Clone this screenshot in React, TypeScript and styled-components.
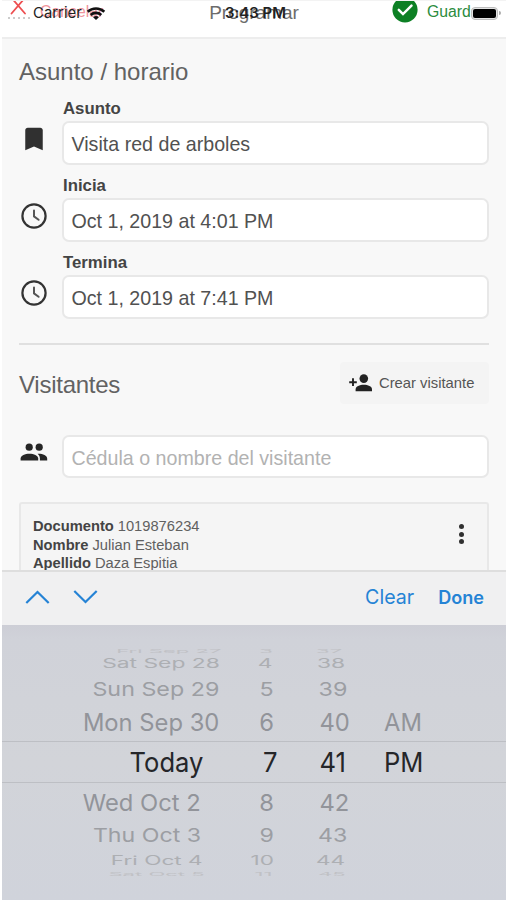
import React from 'react';
import styled, { createGlobalStyle } from 'styled-components';
import { MdBookmark } from 'react-icons/md';

const GlobalStyle = createGlobalStyle`
  * { box-sizing: border-box; }
  body { margin: 0; background: #fff; }
`;

const Screen = styled.div`
  position: relative;
  width: 507px;
  height: 900px;
  padding: 0 1px 0 2px;
  overflow: hidden;
  display: flex;
  flex-direction: column;
  background: #fff;
  color: #4c4c4c;
  font-family: 'Liberation Sans', Arial, sans-serif;
`;

const NavBar = styled.header`
  flex: none;
  height: 39px;
  display: grid;
  grid-template-columns: 1fr auto 1fr;
  align-items: start;
  background: #fff;
  border-top: 1px solid #f3f3f3;
  border-bottom: 2px solid #ededed;
`;

const NavAction = styled.div<{ $tone: string; $end?: boolean }>`
  display: flex;
  align-items: flex-start;
  color: ${(p) => p.$tone};
  font-size: 15.8px;
  line-height: 22px;
  white-space: nowrap;
  ${(p) => (p.$end ? 'padding-left: 93px; gap: 9px;' : 'padding-left: 6px; gap: 10px;')}
`;

const NavTitle = styled.h1`
  margin: 0;
  font-size: 19px;
  font-weight: 400;
  line-height: 24px;
  color: #6c6c6c;
`;

const StatusBar = styled.div`
  position: absolute;
  inset: 4px 6px auto 7px;
  height: 18px;
  display: grid;
  grid-template-columns: 218px 1fr auto;
  align-items: center;
  font-family: Inter, sans-serif;
  font-size: 14.9px;
  color: #222;
`;

const Signal = styled.div`
  display: flex;
  align-items: center;
`;

const SignalDots = styled.div`
  display: flex;
  gap: 3px;
  width: 26px;
  padding: 9px 0 0 1px;
`;

const Dot = styled.i`
  width: 2px;
  height: 2px;
  border-radius: 50%;
  background: #bbb;
`;

const Clock = styled.span`
  font-weight: 600;
  letter-spacing: 0.05px;
`;

const Battery = styled.div`
  display: flex;
  align-items: center;
  gap: 1px;
`;

const BatteryBody = styled.div`
  width: 27px;
  height: 13px;
  padding: 1px;
  border: 1px solid #bdbdbd;
  border-radius: 4px;
  background: #e4e4e4;
  &::before {
    content: '';
    display: block;
    height: 9px;
    border-radius: 2px;
    background: #000;
  }
`;

const BatteryTip = styled.i`
  width: 2px;
  height: 4px;
  border-radius: 0 2px 2px 0;
  background: #aaa;
`;

const Form = styled.main`
  flex: none;
  height: 531px;
  overflow: hidden;
  padding: 19px 17px 0;
  background: #f8f8f8;
`;

const SectionTitle = styled.h2<{ $tight?: boolean }>`
  margin: 0;
  font-size: 24px;
  font-weight: 400;
  line-height: 28px;
  color: #626262;
  letter-spacing: ${(p) => (p.$tight ? '-0.25px' : '0')};
`;

const Fields = styled.div`
  padding-top: 13px;
`;

const Field = styled.div`
  display: grid;
  grid-template-columns: 43px 1fr;
  height: 77.2px;
`;

const FieldIcon = styled.div<{ $top: number; $left?: number }>`
  padding: ${(p) => p.$top}px 0 0 ${(p) => p.$left ?? 0}px;
  color: #303030;
  line-height: 0;
`;

const Label = styled.label`
  display: block;
  height: 22px;
  padding-left: 1px;
  font-size: 16.8px;
  font-weight: 700;
  line-height: 20px;
  color: #444;
`;

const TextBox = styled.div<{ $placeholder?: boolean }>`
  height: 43.5px;
  padding: 1px 0 0 7.5px;
  border: 2px solid #e8e8e8;
  border-radius: 7px;
  background: #fff;
  font-size: 19.65px;
  line-height: 40px;
  white-space: nowrap;
  color: ${(p) => (p.$placeholder ? '#b2b2b2' : '#515151')};
`;

const Divider = styled.hr`
  height: 2px;
  margin: 12px 0 0;
  border: 0;
  background: #e0e0e0;
`;

const SectionHeader = styled.div`
  display: flex;
  align-items: center;
  justify-content: space-between;
  height: 44px;
  margin-top: 17px;
`;

const HeaderTitle = styled.div`
  padding-top: 2px;
`;

const CreateButton = styled.button`
  display: flex;
  align-items: center;
  gap: 6px;
  width: 149px;
  height: 42px;
  margin-bottom: 2px;
  padding: 0 0 0 9px;
  border: 0;
  border-radius: 4px;
  background: #f4f4f4;
  color: #555;
  font: 14.8px 'Liberation Sans', Arial, sans-serif;
  white-space: nowrap;
  svg { flex: none; }
`;

const SearchRow = styled.div`
  display: grid;
  grid-template-columns: 43px 1fr;
  margin-top: 29px;
`;

const VisitorCard = styled.article`
  display: flex;
  justify-content: space-between;
  height: 110px;
  margin-top: 24px;
  padding: 13px 19px 0 12px;
  border: 2px solid #e8e8e8;
  border-radius: 3px;
  background: #f5f5f5;
`;

const Details = styled.dl`
  margin: 0;
  font-size: 14.7px;
  line-height: 18.6px;
  color: #606060;
`;

const Detail = styled.div`
  display: flex;
  gap: 4px;
`;

const Term = styled.dt`
  font-weight: 700;
  color: #444;
`;

const Value = styled.dd`
  margin: 0;
`;

const Kebab = styled.div`
  display: flex;
  flex-direction: column;
  gap: 2.6px;
  padding: 7px 4px 0 0;
`;

const KebabDot = styled.i`
  width: 5px;
  height: 5px;
  border-radius: 50%;
  background: #303030;
`;

const Accessory = styled.div`
  flex: none;
  height: 55px;
  display: flex;
  align-items: center;
  padding: 0 22px 3px 23px;
  border-top: 2px solid #dedede;
  background: #f0f0f1;
  color: #2583d5;
  font-family: Inter, sans-serif;
`;

const Arrows = styled.div`
  display: flex;
  gap: 23px;
  flex: 1;
`;

const BarButton = styled.span<{ $strong?: boolean }>`
  font-size: ${(p) => (p.$strong ? 18.1 : 19.6)}px;
  font-weight: ${(p) => (p.$strong ? 600 : 400)};
  margin-left: ${(p) => (p.$strong ? 24 : 0)}px;
`;

const Picker = styled.section`
  flex: 1;
  padding-top: 22px;
  background: linear-gradient(#cdced6 0, #d0d2d9 14px, #d2d4d9 50%, #d0d3db 100%);
  font-family: Inter, sans-serif;
`;

const PickerRow = styled.div<{ $h: number; $color: string; $selected?: boolean; $clip?: boolean }>`
  display: grid;
  grid-template-columns: 217px 55px 45px 65px 1fr;
  align-items: center;
  height: ${(p) => p.$h}px;
  color: ${(p) => p.$color};
  font-size: ${(p) => (p.$selected ? 27.5 : 24)}px;
  line-height: 0;
  white-space: nowrap;
  overflow: ${(p) => (p.$clip ? 'hidden' : 'visible')};
  border: solid #bdbfc4;
  border-width: ${(p) => (p.$selected ? '1.5px 0' : '0')};
`;

const Cell = styled.span<{ $sx: number; $sy: number; $shift?: number; $from?: 'left' | 'right' }>`
  justify-self: ${(p) => (p.$from === 'left' ? 'start' : 'end')};
  transform: translateX(${(p) => p.$shift ?? 0}px) scale(${(p) => p.$sx}, ${(p) => p.$sy});
  transform-origin: ${(p) => p.$from ?? 'right'} center;
`;

const Minute = styled(Cell)`
  grid-column: 4;
`;

type Slot = {
  date: string; hour: string; minute: string; half?: string;
  h: number; sx: number; sy: number; color: string;
  dx: number; hx?: number; mx?: number; selected?: boolean; clip?: boolean;
};

const slots: Slot[] = [
  { date: 'Fri Sep 27', hour: '3', minute: '37', h: 7, sx: 0.92, sy: 0.22, color: '#c0c1c5', dx: 2, hx: -1, mx: -3, clip: true },
  { date: 'Sat Sep 28', hour: '4', minute: '38', h: 20, sx: 0.95, sy: 0.54, color: '#adafb3', dx: 1, hx: -1, mx: -2 },
  { date: 'Sun Sep 29', hour: '5', minute: '39', h: 31, sx: 0.97, sy: 0.8, color: '#9c9ea3', dx: 0.5, mx: -0.5 },
  { date: 'Mon Sep 30', hour: '6', minute: '40', half: 'AM', h: 36, sx: 0.99, sy: 0.99, color: '#92949a', dx: 0.5, mx: 0.5 },
  { date: 'Today', hour: '7', minute: '41', half: 'PM', h: 42, sx: 0.93, sy: 1, color: '#252629', dx: -16, hx: 4, mx: 0.5, selected: true },
  { date: 'Wed Oct 2', hour: '8', minute: '42', h: 39, sx: 0.99, sy: 0.98, color: '#92949a', dx: -18.5, mx: 0.5 },
  { date: 'Thu Oct 3', hour: '9', minute: '43', h: 28, sx: 0.965, sy: 0.8, color: '#9c9ea3', dx: -18, mx: -1 },
  { date: 'Fri Oct 4', hour: '10', minute: '44', h: 21, sx: 0.94, sy: 0.52, color: '#adafb3', dx: -16, hx: 0, mx: -3 },
  { date: 'Sat Oct 5', hour: '11', minute: '45', h: 5, sx: 0.92, sy: 0.2, color: '#c0c1c5', dx: -14, hx: -1, mx: -1, clip: true },
];

const ClockIcon = () => (
  <svg width="28" height="28" viewBox="0 0 28 28" fill="none" stroke="#333" strokeLinecap="round">
    <circle cx="14" cy="14" r="11.6" strokeWidth="2.2" />
    <path d="M14 8.6v5.8l4.6 3.4" stroke="#555" strokeWidth="2" strokeLinejoin="round" />
  </svg>
);

const PeopleIcon = () => (
  <svg width="30" height="22" viewBox="0 0 30 22" fill="#262626">
    <circle cx="10.2" cy="5.2" r="3.6" />
    <circle cx="20.2" cy="5.2" r="3.6" />
    <path d="M1.6 18.6v-2c0-3 4.4-4.9 8.8-4.9s8.8 1.900 8.800 4.900v2z" />
    <path d="M20.900 18.600v-2.200c0-1.900-.9-3.400-2.300-4.600 4.600-.3 9.600 1.500 9.600 4.800v2z" />
  </svg>
);

const PersonAddIcon = () => (
  <svg width="24" height="20" viewBox="0 0 24 20" fill="#222">
    <circle cx="14.800" cy="5.600" r="4.300" />
    <path d="M6.600 18.300v-1.900c0-3 4.100-4.600 8.200-4.600s8.200 1.600 8.200 4.600v1.900z" />
    <path d="M4 5.300v7.800M.2 9.200h7.600" stroke="#222" strokeWidth="1.900" />
  </svg>
);

const Chevron = ({ up }: { up?: boolean }) => (
  <svg width="25" height="16" viewBox="0 0 25 16" fill="none" stroke="#2583d5" strokeWidth="2.2">
    <path d={up ? 'M1.3 14 12.5 3l11.2 11' : 'M1.3 2 12.5 13l11.2-11'} />
  </svg>
);

const CancelIcon = () => (
  <svg width="22" height="18" viewBox="0 0 22 18" fill="none" stroke="#ed4e50" strokeWidth="1.8">
    <path d="M4.500-2 17 12.500M16-2 3.500 12.500" strokeLinecap="round" />
  </svg>
);

const ConfirmIcon = () => (
  <svg width="26" height="24" viewBox="0 0 26 24" fill="none">
    <circle cx="13" cy="8.800" r="12.600" fill="#0d8024" />
    <path d="m6.800 8.800 4.200 4.300 8.500-8.400" stroke="#fff" strokeWidth="2.500" strokeLinecap="round" />
  </svg>
);

const WifiIcon = () => (
  <svg width="20" height="15" viewBox="0 0 19 15" fill="none" stroke="#111" strokeWidth="2.600">
    <path d="M1.200 5.800c4.700-4.500 11.900-4.500 16.600 0M4.200 9c3-2.800 7.600-2.800 10.600 0" />
    <path d="M6.600 11.200c1.700-1.500 4.100-1.500 5.800 0L9.500 14z" fill="#111" stroke="none" />
  </svg>
);

export default function App() {
  return (
    <Screen>
      <GlobalStyle />
      <NavBar>
        <NavAction $tone="#f0949c"><CancelIcon />Cancelar</NavAction>
        <NavTitle>Programar</NavTitle>
        <NavAction $tone="#2c8c3e" $end><ConfirmIcon />Guardar</NavAction>
      </NavBar>
      <StatusBar>
        <Signal>
          <SignalDots><Dot /><Dot /><Dot /><Dot /><Dot /></SignalDots>
          Carrier&nbsp;<WifiIcon />
        </Signal>
        <Clock>3:43 PM</Clock>
        <Battery><BatteryBody /><BatteryTip /></Battery>
      </StatusBar>
      <Form>
        <SectionTitle>Asunto / horario</SectionTitle>
        <Fields>
          <Field>
            <FieldIcon $top={25}><MdBookmark size={30} /></FieldIcon>
            <div><Label>Asunto</Label><TextBox>Visita red de arboles</TextBox></div>
          </Field>
          <Field>
            <FieldIcon $top={26} $left={1}><ClockIcon /></FieldIcon>
            <div><Label>Inicia</Label><TextBox>Oct 1, 2019 at 4:01 PM</TextBox></div>
          </Field>
          <Field>
            <FieldIcon $top={26} $left={1}><ClockIcon /></FieldIcon>
            <div><Label>Termina</Label><TextBox>Oct 1, 2019 at 7:41 PM</TextBox></div>
          </Field>
        </Fields>
        <Divider />
        <SectionHeader>
          <HeaderTitle><SectionTitle $tight>Visitantes</SectionTitle></HeaderTitle>
          <CreateButton><PersonAddIcon />Crear visitante</CreateButton>
        </SectionHeader>
        <SearchRow>
          <FieldIcon $top={7}><PeopleIcon /></FieldIcon>
          <TextBox $placeholder>Cédula o nombre del visitante</TextBox>
        </SearchRow>
        <VisitorCard>
          <Details>
            <Detail><Term>Documento</Term><Value>1019876234</Value></Detail>
            <Detail><Term>Nombre</Term><Value>Julian Esteban</Value></Detail>
            <Detail><Term>Apellido</Term><Value>Daza Espitia</Value></Detail>
          </Details>
          <Kebab><KebabDot /><KebabDot /><KebabDot /></Kebab>
        </VisitorCard>
      </Form>
      <Accessory>
        <Arrows><Chevron up /><Chevron /></Arrows>
        <BarButton>Clear</BarButton>
        <BarButton $strong>Done</BarButton>
      </Accessory>
      <Picker>
        {slots.map((s) => (
          <PickerRow key={s.date} $h={s.h} $color={s.color} $selected={s.selected} $clip={s.clip}>
            <Cell $sx={s.sx} $sy={s.sy} $shift={s.dx}>{s.date}</Cell>
            <Cell $sx={s.sx} $sy={s.sy} $shift={s.hx}>{s.hour}</Cell>
            <Minute $sx={s.sx} $sy={s.sy} $shift={s.mx} $from="left">{s.minute}</Minute>
            {s.half && <Cell $sx={s.sx} $sy={s.sy} $from="left">{s.half}</Cell>}
          </PickerRow>
        ))}
      </Picker>
    </Screen>
  );
}
